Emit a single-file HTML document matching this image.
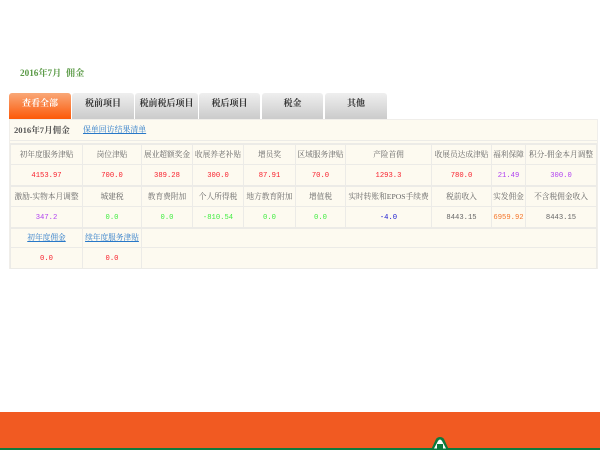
<!DOCTYPE html>
<html lang="zh"><head><meta charset="utf-8">
<style>
html,body{margin:0;padding:0;background:#fff;}
body{width:600px;height:450px;overflow:hidden;position:relative;font-family:"Liberation Serif","Noto Serif CJK SC",serif;}
.a{position:absolute;}
.tab{position:absolute;top:93px;height:26px;line-height:21px;text-align:center;font-size:9px;font-weight:bold;color:#333;background:linear-gradient(#efefef,#cbcbcb);border-radius:3px 3px 0 0;white-space:nowrap;}
.tab.on{color:#fff;background:linear-gradient(#f9a878,#fc5808);}
.c{position:absolute;text-align:center;white-space:nowrap;font-size:7.7px;color:#666;line-height:21px;filter:blur(.3px);}
.c.v{font-family:"Liberation Mono","Noto Serif CJK SC",monospace;font-size:7.2px;line-height:22px;}
.l{position:absolute;background:#ecebe7;}
.r{color:#f8202c}.p{color:#b040f0}.g{color:#40ec40}.b{color:#1818d0}.o{color:#f47428}.h{color:#666}
u{color:#2878c8;}
</style></head><body>
<div class="a" style="left:20px;top:66px;font-size:9.200px;font-weight:bold;color:#5a9a46;line-height:14px;white-space:nowrap;filter:blur(.25px)">2016年7月&nbsp;&nbsp;佣金</div>

<div class="tab on" style="left:9px;width:62px">查看全部</div>
<div class="tab" style="left:72px;width:62px">税前项目</div>
<div class="tab" style="left:135px;width:63px">税前税后项目</div>
<div class="tab" style="left:199px;width:61px">税后项目</div>
<div class="tab" style="left:262px;width:61px">税金</div>
<div class="tab" style="left:325px;width:62px">其他</div>

<div class="a" style="left:9px;top:119px;width:589px;height:150px;background:#fdfaf0;box-sizing:border-box;border:1px solid #f0eeea"></div>
<div class="a" style="left:14px;top:122.500px;font-size:8.600px;color:#555;font-weight:bold;line-height:14px;white-space:nowrap;filter:blur(.25px)">2016年7月佣金</div>
<div class="a" style="left:83px;top:123px;font-size:7.900px;line-height:14px;white-space:nowrap;filter:blur(.25px)"><u>保单回访结果清单</u></div>

<div class="l" style="left:10px;top:140px;width:587px;height:1px"></div>
<div class="l" style="left:10px;top:143px;width:587px;height:2px"></div>
<div class="l" style="left:10px;top:164px;width:587px;height:1px"></div>
<div class="l" style="left:10px;top:185px;width:587px;height:2px"></div>
<div class="l" style="left:10px;top:206px;width:587px;height:1px"></div>
<div class="l" style="left:10px;top:227px;width:587px;height:2px"></div>
<div class="l" style="left:10px;top:247px;width:587px;height:1px"></div>
<div class="l" style="left:10px;top:268px;width:587px;height:1px"></div>
<div class="l" style="left:10px;top:143px;width:1px;height:125px"></div>
<div class="l" style="left:82px;top:143px;width:1px;height:125px"></div>
<div class="l" style="left:141px;top:143px;width:1px;height:125px"></div>
<div class="l" style="left:192px;top:143px;width:1px;height:84px"></div>
<div class="l" style="left:243px;top:143px;width:1px;height:84px"></div>
<div class="l" style="left:295px;top:143px;width:1px;height:84px"></div>
<div class="l" style="left:345px;top:143px;width:1px;height:84px"></div>
<div class="l" style="left:431px;top:143px;width:1px;height:84px"></div>
<div class="l" style="left:491px;top:143px;width:1px;height:84px"></div>
<div class="l" style="left:525px;top:143px;width:1px;height:84px"></div>
<div class="l" style="left:596px;top:143px;width:1px;height:125px"></div>

<!-- row 1 -->
<div class="c" style="left:11px;width:71px;top:144px">初年度服务津贴</div>
<div class="c" style="left:83px;width:58px;top:144px">岗位津贴</div>
<div class="c" style="left:142px;width:50px;top:144px">展业超额奖金</div>
<div class="c" style="left:193px;width:50px;top:144px">收展养老补贴</div>
<div class="c" style="left:244px;width:51px;top:144px">增员奖</div>
<div class="c" style="left:296px;width:49px;top:144px">区域服务津贴</div>
<div class="c" style="left:346px;width:85px;top:144px">产险首佣</div>
<div class="c" style="left:432px;width:59px;top:144px">收展员达成津贴</div>
<div class="c" style="left:492px;width:33px;top:144px">福利保障</div>
<div class="c" style="left:526px;width:70px;top:144px">积分-佣金本月调整</div>
<!-- row 2 -->
<div class="c v r" style="left:11px;width:71px;top:165px">4153.97</div>
<div class="c v r" style="left:83px;width:58px;top:165px">700.0</div>
<div class="c v r" style="left:142px;width:50px;top:165px">389.28</div>
<div class="c v r" style="left:193px;width:50px;top:165px">300.0</div>
<div class="c v r" style="left:244px;width:51px;top:165px">87.91</div>
<div class="c v r" style="left:296px;width:49px;top:165px">70.0</div>
<div class="c v r" style="left:346px;width:85px;top:165px">1293.3</div>
<div class="c v r" style="left:432px;width:59px;top:165px">780.0</div>
<div class="c v p" style="left:492px;width:33px;top:165px">21.49</div>
<div class="c v p" style="left:526px;width:70px;top:165px">300.0</div>
<!-- row 3 -->
<div class="c" style="left:11px;width:71px;top:186px">激励-实物本月调整</div>
<div class="c" style="left:83px;width:58px;top:186px">城建税</div>
<div class="c" style="left:142px;width:50px;top:186px">教育费附加</div>
<div class="c" style="left:193px;width:50px;top:186px">个人所得税</div>
<div class="c" style="left:244px;width:51px;top:186px">地方教育附加</div>
<div class="c" style="left:296px;width:49px;top:186px">增值税</div>
<div class="c" style="left:346px;width:85px;top:186px">实时转账和EPOS手续费</div>
<div class="c" style="left:432px;width:59px;top:186px">税前收入</div>
<div class="c" style="left:492px;width:33px;top:186px">实发佣金</div>
<div class="c" style="left:526px;width:70px;top:186px">不含税佣金收入</div>
<!-- row 4 -->
<div class="c v p" style="left:11px;width:71px;top:207px">347.2</div>
<div class="c v g" style="left:83px;width:58px;top:207px">0.0</div>
<div class="c v g" style="left:142px;width:50px;top:207px">0.0</div>
<div class="c v g" style="left:193px;width:50px;top:207px">-810.54</div>
<div class="c v g" style="left:244px;width:51px;top:207px">0.0</div>
<div class="c v g" style="left:296px;width:49px;top:207px">0.0</div>
<div class="c v b" style="left:346px;width:85px;top:207px">-4.0</div>
<div class="c v h" style="left:432px;width:59px;top:207px">8443.15</div>
<div class="c v o" style="left:492px;width:33px;top:207px">6959.92</div>
<div class="c v h" style="left:526px;width:70px;top:207px">8443.15</div>
<!-- row 5 -->
<div class="c" style="left:11px;width:71px;top:227px"><u>初年度佣金</u></div>
<div class="c" style="left:83px;width:58px;top:227px"><u>续年度服务津贴</u></div>
<!-- row 6 -->
<div class="c v r" style="left:11px;width:71px;top:248px">0.0</div>
<div class="c v r" style="left:83px;width:58px;top:248px">0.0</div>

<!-- footer -->
<div class="a" style="left:0;top:412px;width:600px;height:38px;background:#f15a22"></div>
<div class="a" style="left:0;top:448px;width:600px;height:2px;background:#0e7a3e"></div>
<svg class="a" style="left:425px;top:434px" width="32" height="16" viewBox="0 0 32 16">
<path d="M6 16 L11 5 Q12.500 3 15 3 Q17.500 3 19 5 L24 16Z" fill="#0e7a3e"/>
<path d="M9 14.500 L13 7 Q14 5.500 15 5.500 Q16 5.500 17 7 L21 14.500Z" fill="#fff"/>
<rect x="12" y="10" width="6" height="6" fill="#0e7a3e"/>
</svg>
</body></html>
